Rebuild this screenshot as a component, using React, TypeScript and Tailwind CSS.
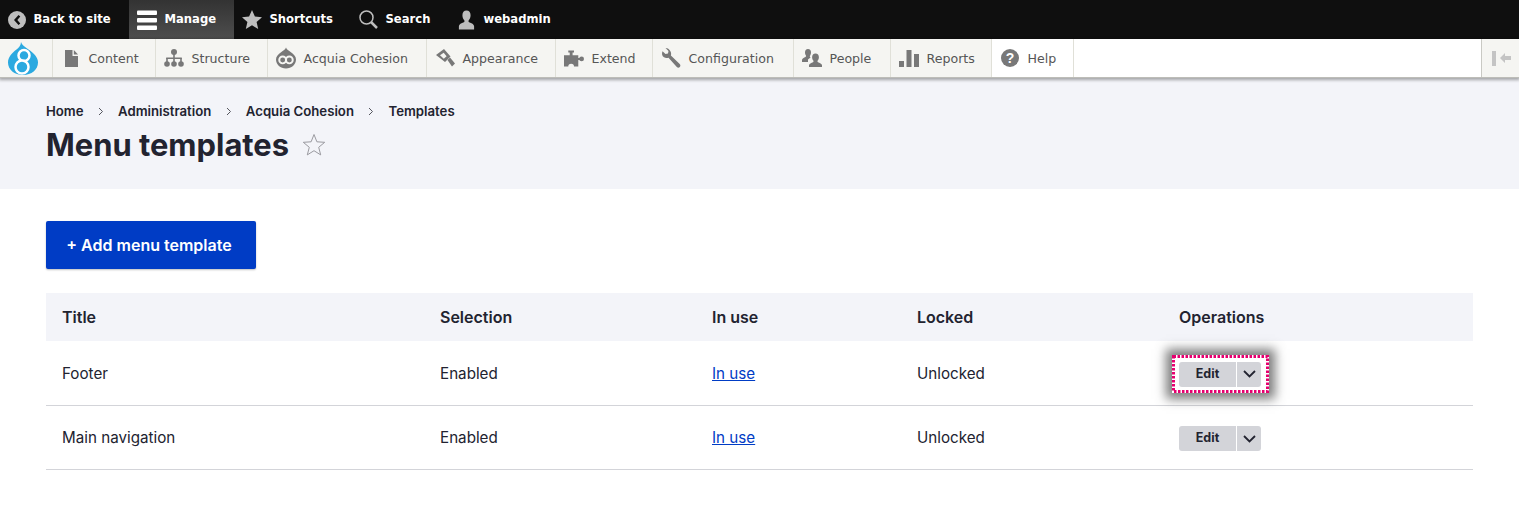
import { ReactNode } from "react";

const toolbarFont = { fontFamily: '"DejaVu Sans", sans-serif' };
const gray = "#787878";

function BackIcon() {
    return (
        <svg width="18" height="18" viewBox="0 0 18 18">
            <circle cx="9" cy="9" r="9" fill="#bebebe" />
            <path d="M10.5 4 6 9l4.5 5 1.8-1.6L9.3 9l3-3.4z" fill="#0f0f0f" />
        </svg>
    );
}

function ManageIcon() {
    return (
        <svg width="20" height="20" viewBox="0 0 20 20" fill="#fff">
            <rect x="0" y="0.5" width="20" height="4.5" rx="1" />
            <rect x="0" y="8" width="20" height="4.5" rx="1" />
            <rect x="0" y="15.5" width="20" height="4.5" rx="1" />
        </svg>
    );
}

function StarIcon() {
    return (
        <svg width="20" height="20" viewBox="0 0 20 20">
            <path d="M10 0l2.9 6.6 7.1.7-5.4 4.7 1.6 7L10 15.3l-6.2 3.7 1.6-7L0 7.3l7.1-.7z" fill="#bebebe" />
        </svg>
    );
}

function SearchIcon() {
    return (
        <svg width="19" height="19" viewBox="0 0 19 19" fill="none" stroke="#bebebe">
            <circle cx="7.5" cy="7.5" r="6.5" strokeWidth="1.5" />
            <path d="M12 12l6 6" strokeWidth="2.5" />
        </svg>
    );
}

function UserIcon() {
    return (
        <svg width="19" height="20" viewBox="0 0 20 20" fill="#bebebe">
            <path d="M10 0c2.8 0 4.3 2.2 4.3 4.9 0 2.3-.9 4.2-1.9 5.3-.5.6-.4 1.8.4 2.2 2.5 1.1 5.2 2 5.2 4.2V20H2v-3.4c0-2.2 2.7-3.1 5.2-4.2.8-.4.9-1.6.4-2.2-1-1.1-1.9-3-1.9-5.300C5.700 2.200 7.200 0 10 0z" />
        </svg>
    );
}

function DropLogo() {
    return (
        <svg width="30" height="33" viewBox="0 0 30 33">
            <path d="M13 0c.8 3 3.500 4.500 7.500 7.500C25.500 11 30 15 30 20.500 30 27.500 23.500 33 15 33S0 27.500 0 20.500C0 15 4 11 8.500 7.500 11 5.500 13 3.500 13 0z" fill="#2ba9e0" />
            <circle cx="16" cy="13.5" r="5.5" fill="none" stroke="#fff" strokeWidth="2.5" />
            <circle cx="14" cy="25" r="6.5" fill="#2ba9e0" stroke="#fff" strokeWidth="2.5" />
        </svg>
    );
}

function ContentIcon() {
    return (
        <svg width="13" height="17" viewBox="0 0 13 17" fill={gray}>
            <path d="M0 0h7.500v6H13v11H0z" />
            <path d="M8.800 0 13 4.500H8.800z" />
        </svg>
    );
}

function StructureIcon() {
    return (
        <svg width="20" height="18" viewBox="0 0 20 18" fill={gray}>
            <circle cx="10" cy="3" r="3" />
            <rect x="9.2" y="5" width="1.6" height="9" />
            <rect x="2.2" y="8.5" width="15.6" height="1.5" />
            <rect x="2.2" y="9" width="1.6" height="5" />
            <rect x="16.2" y="9" width="1.6" height="5" />
            <circle cx="3" cy="15" r="2.8" />
            <circle cx="10" cy="15" r="2.8" />
            <circle cx="17" cy="15" r="2.8" />
        </svg>
    );
}

function CohesionIcon() {
    return (
        <svg width="21" height="22" viewBox="0 0 21 22">
            <path d="M10.500 0c.8 2.200 2.800 3.200 5.200 5C18.500 7.200 21 9.500 21 12.500 21 17.800 16.300 22 10.500 22S0 17.800 0 12.500C0 9.500 2.500 7.200 5.300 5 7.700 3.200 9.700 2.200 10.500 0z" fill={gray} />
            <circle cx="7" cy="13" r="3.6" fill="none" stroke="#f5f5f2" strokeWidth="2" />
            <circle cx="14" cy="13" r="3.6" fill="none" stroke="#f5f5f2" strokeWidth="2" />
        </svg>
    );
}

function HammerIcon() {
    return (
        <svg width="19" height="18" viewBox="0 0 19 18" fill={gray}>
            <path fillRule="evenodd" d="M0 6l8-6 6.500 7.500-5.500 5.500zM4 6.300l3.800 3.500 2.800-2.500L7.700 3.700z" />
            <path d="M11.500 11l2.500-2.500 5 6-3 3z" />
        </svg>
    );
}

function PuzzleIcon() {
    return (
        <svg width="21" height="17" viewBox="0 0 21 17" fill={gray}>
            <path d="M4.500 0h6v2.200H9V5h6v3h2v2h-2v7h-4.500a3 3 0 0 0-6 0H0V5h6V2.200H4.500z" />
            <circle cx="18.5" cy="9" r="2.5" />
        </svg>
    );
}

function WrenchIcon() {
    return (
        <svg width="20" height="20" viewBox="0 0 20 20" fill={gray}>
            <path d="M4.500 0 7.500 3l-.5 2.500L4.500 6 1.500 3.200C.5 5.500 1 8 3 9.300c1.500 1 3 .9 4.500.4l8.300 9.300c.9.900 2.200.900 3 .1.800-.9.800-2.200-.1-3L9.900 7.500c.5-1.700.3-3.500-1-5C7.500 .7 6.500 0 4.500 0z" />
        </svg>
    );
}

function PeopleIcon() {
    return (
        <svg width="20" height="18" viewBox="0 0 20 18" fill={gray}>
            <path d="M6 0c2 0 3 1.500 3 3.500 0 1.300-.5 2.500-1 3.300-.4.600 0 1.300.5 1.600L6 10.500V13H0v-2c0-1.500 2-2.200 3.500-3 .6-.4.700-1.200.3-1.700C3.300 5.500 3 4.800 3 3.500 3 1.500 4 0 6 0z" />
            <path d="M13.500 4.500c2.200 0 3.400 1.600 3.400 3.700 0 1.400-.6 2.600-1.200 3.400-.4.500-.3 1.300.3 1.600 1.500.7 4 1.300 4 3V18H7v-1.800c0-1.700 2.500-2.300 4-3 .6-.3.700-1.100.3-1.600-.6-.8-1.200-2-1.200-3.400 0-2.100 1.200-3.700 3.400-3.700z" />
        </svg>
    );
}

function ReportsIcon() {
    return (
        <svg width="20" height="17" viewBox="0 0 20 17" fill={gray}>
            <rect x="0" y="11" width="5" height="6" />
            <rect x="7.5" y="0" width="5" height="17" />
            <rect x="15" y="4" width="5" height="13" />
        </svg>
    );
}

function HelpIcon() {
    return (
        <svg width="18" height="18" viewBox="0 0 18 18">
            <circle cx="9" cy="9" r="9" fill={gray} />
            <text x="9" y="14" textAnchor="middle" fontSize="14" fontWeight="700" fill="#fff" fontFamily="Liberation Sans, sans-serif">?</text>
        </svg>
    );
}

function TopItem({ icon, label, className }: { icon: ReactNode; label: string; className: string }) {
    return (
        <div className={`h-[39px] flex items-center shrink-0 ${className}`}>
            {icon}
            <span className="text-white text-[11.6px] font-bold ml-[7.5px] pt-px">{label}</span>
        </div>
    );
}

function TrayItem({ icon, label, width, white }: { icon: ReactNode; label: string; width: number; white?: boolean }) {
    return (
        <div
            className={`h-full flex items-center pl-2 gap-[7.5px] border-r border-[#e0e0d8] shrink-0 ${white ? "bg-white" : ""}`}
            style={{ width }}
        >
            <span className="w-[20px] flex justify-center">{icon}</span>
            <span className="text-[12.6px] text-[#565656] pt-[2px]">{label}</span>
        </div>
    );
}

function EditButton({ focused }: { focused?: boolean }) {
    const btn = (
        <div className="flex h-[25px] w-[82px] rounded-[3px] bg-[#d3d4d9] text-[#222330] text-[12.5px] font-bold">
            <div className="w-[58px] flex items-center justify-center border-r border-white">Edit</div>
            <div className="flex-1 flex items-center justify-center">
                <svg width="13" height="8" viewBox="0 0 13 8" fill="none" stroke="#222330" strokeWidth="1.8">
                    <path d="M1 1l5.500 5.500L12 1" />
                </svg>
            </div>
        </div>
    );
    if (!focused) return <div className="mt-[3px]">{btn}</div>;
    return (
        <div className="relative w-[82px] h-[25px] mt-[3px]">
            <div className="absolute left-[-7px] top-[-7px] w-[97px] h-[38px] bg-white shadow-[0_0_10px_6px_rgba(70,70,70,0.7)]">
                <svg width="97" height="38" className="absolute inset-0">
                    <rect x="1.5" y="1.5" width="94" height="35" fill="none" stroke="#e6006f" strokeWidth="3" strokeDasharray="2.5 1.5" />
                </svg>
            </div>
            <div className="absolute inset-0">{btn}</div>
        </div>
    );
}

const rows = [
    { title: "Footer", focused: true },
    { title: "Main navigation", focused: false },
];

function Sep() {
    return (
        <svg className="mx-[14.25px]" width="6" height="9" viewBox="0 0 6 9" fill="none" stroke="#55565e" strokeWidth="1">
            <path d="M1 1l3.500 3.500L1 8" />
        </svg>
    );
}

export default function App() {
    return (
        <div className="w-[1519px] h-[519px] overflow-hidden bg-white" style={{ fontFamily: "Inter, sans-serif" }}>
            <div className="h-[39px] bg-[#0f0f0f] flex items-center" style={toolbarFont}>
                <TopItem className="w-[129px] pl-[8px]" icon={<BackIcon />} label="Back to site" />
                <TopItem className="w-[105px] pl-[8px] bg-gradient-to-b from-[#333333] to-[#4e4e4e]" icon={<ManageIcon />} label="Manage" />
                <TopItem className="w-[117px] pl-[8px]" icon={<StarIcon />} label="Shortcuts" />
                <TopItem className="w-[97px] pl-[8px]" icon={<SearchIcon />} label="Search" />
                <TopItem className="pl-[9px]" icon={<UserIcon />} label="webadmin" />
            </div>

            <div className="relative z-10 h-[39px] bg-white flex shadow-[0_1px_3px_1px_rgba(0,0,0,0.33)] border-b border-[#bdbdb8]" style={toolbarFont}>
                <div className="w-[53px] h-full bg-[#f5f5f2] border-r border-[#e0e0d8] flex items-center pl-[8px] shrink-0">
                    <DropLogo />
                </div>
                <div className="flex h-full bg-[#f5f5f2]">
                    <TrayItem icon={<ContentIcon />} label="Content" width={103} />
                    <TrayItem icon={<StructureIcon />} label="Structure" width={112} />
                    <TrayItem icon={<CohesionIcon />} label="Acquia Cohesion" width={159} />
                    <TrayItem icon={<HammerIcon />} label="Appearance" width={129} />
                    <TrayItem icon={<PuzzleIcon />} label="Extend" width={97} />
                    <TrayItem icon={<WrenchIcon />} label="Configuration" width={141} />
                    <TrayItem icon={<PeopleIcon />} label="People" width={97} />
                    <TrayItem icon={<ReportsIcon />} label="Reports" width={101} />
                    <TrayItem icon={<HelpIcon />} label="Help" width={82} white />
                </div>
                <div className="flex-1" />
                <div className="w-[38px] h-full bg-[#f5f5f2] border-l border-[#c9c9c4] flex items-center pl-[10px] gap-[4px]">
                    <div className="w-[4px] h-[15px] bg-[#c4c4c4]" />
                    <svg width="11" height="10" viewBox="0 0 11 10" fill="#c4c4c4">
                        <path d="M0 5l5-5v3h6v4H5v3z" />
                    </svg>
                </div>
            </div>

            <div className="h-[111px] bg-[#f3f4f9] px-[46px] pt-[25px]">
                <div className="flex items-center text-[13.2px] leading-[17px] font-semibold text-[#222330]">
                    <span>Home</span>
                    <Sep />
                    <span>Administration</span>
                    <Sep />
                    <span>Acquia Cohesion</span>
                    <Sep />
                    <span>Templates</span>
                </div>
                <div className="flex items-center mt-[5px]">
                    <h1 className="text-[30.9px] leading-[40px] font-bold text-[#222330]">Menu templates</h1>
                    <svg className="ml-[13px]" width="24" height="24" viewBox="0 0 24 24" fill="none" stroke="#9a9aa0" strokeWidth="1">
                        <path d="M12 1.5l2.900 7.300 7.800.5-6 5 2 7.600-6.700-4.200-6.700 4.200 2-7.600-6-5 7.800-.5z" />
                    </svg>
                </div>
            </div>

            <div className="px-[46px] pt-[32px]">
                <div className="w-[210px] h-[48px] rounded-[2px] bg-[#003cc5] text-white text-[16px] font-semibold flex items-center justify-center pr-[4px] shadow-[0_1px_2px_rgba(0,0,0,0.25)]">
                    + Add menu template
                </div>

                <table className="mt-[24px] w-[1427px] table-fixed text-[15.2px] text-[#222330] border-collapse">
                    <colgroup>
                        <col className="w-[378px]" />
                        <col className="w-[272px]" />
                        <col className="w-[205px]" />
                        <col className="w-[262px]" />
                        <col />
                    </colgroup>
                    <thead>
                        <tr className="h-[48px] bg-[#f3f4f9] text-left text-[16px]">
                            <th className="pl-4 font-semibold">Title</th>
                            <th className="pl-4 font-semibold">Selection</th>
                            <th className="pl-4 font-semibold">In use</th>
                            <th className="pl-4 font-semibold">Locked</th>
                            <th className="pl-4 font-semibold">Operations</th>
                        </tr>
                    </thead>
                    <tbody>
                        {rows.map((row) => (
                            <tr key={row.title} className="h-[64px] border-b border-[#d3d4d9]">
                                <td className="pl-4 pt-[2px] leading-[24px]">{row.title}</td>
                                <td className="pl-4 pt-[2px] leading-[24px]">Enabled</td>
                                <td className="pl-4 pt-[2px] leading-[24px]">
                                    <span className="text-[#003cc5] underline">In use</span>
                                </td>
                                <td className="pl-4 pt-[2px] leading-[24px]">Unlocked</td>
                                <td className="pl-4">
                                    <EditButton focused={row.focused} />
                                </td>
                            </tr>
                        ))}
                    </tbody>
                </table>
            </div>
        </div>
    );
}
